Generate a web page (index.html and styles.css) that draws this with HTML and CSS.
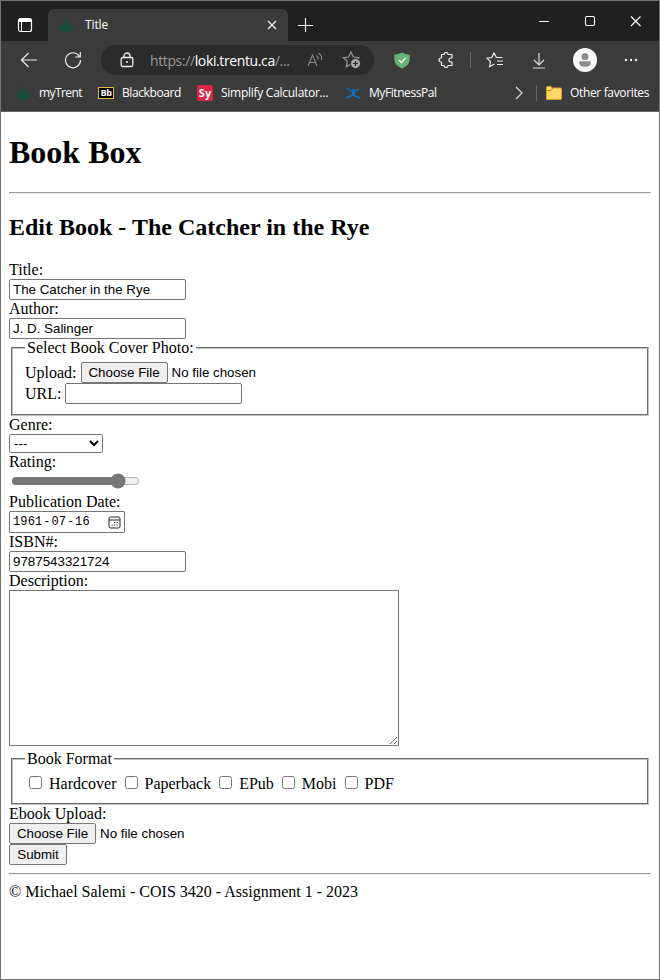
FILE: index.html
```html
<!DOCTYPE html>
<html lang="en">
<head>
<meta charset="utf-8">
<title>Title</title>
<link rel="stylesheet" href="styles.css">
</head>
<body>
<div class="window">
  <div class="tabs">
    <svg class="tab-menu" width="16" height="16" viewBox="0 0 16 16"><rect x="1.500" y="1.500" width="13" height="13" rx="2" fill="none" stroke="#fff" stroke-width="1.200"/><path d="M1.500 5V3a1.500 1.500 0 0 1 1.500-1.500h10A1.500 1.500 0 0 1 14.500 3v2z" fill="#fff"/><path d="M4.500 5v9.500" stroke="#fff"/></svg>
    <div class="tab">
      <svg class="leaf" width="16" height="16" viewBox="0 0 16 16"><path d="M8 .5l1.600 3.500-.9 3 2.800-1-.5 2H15.500l-1.700 3 .4 1.500L10.500 15h-5l-3.700-2.500.4-1.500L.5 8H5l-.5-2 2.800 1-.9-3z"/></svg>
      <span class="tab-title">Title</span>
      <svg width="10" height="10" viewBox="0 0 10 10"><path d="M1 1l8 8M9 1L1 9" stroke="#eee" stroke-width="1.300"/></svg>
    </div>
    <svg class="new-tab" width="16" height="16" viewBox="0 0 16 16"><path d="M8.500 1v14M1 8.500h15" stroke="#eee" stroke-width="1.200"/></svg>
    <svg class="controls" width="104" height="12" viewBox="0 0 104 12" fill="none" stroke="#fff" stroke-width="1.100"><path d="M0 6.500h10M92 1.500l9.500 9.500M101.500 1.500L92 11"/><rect x="46.500" y="1.500" width="9" height="9" rx="1.500"/></svg>
  </div>

  <div class="toolbar">
    <svg class="back" width="18" height="16" viewBox="0 0 18 16"><path d="M17 8H1.500M8.500 1L1.500 8l7 7" fill="none" stroke="#eee" stroke-width="1.200"/></svg>
    <svg class="reload" width="18" height="18" viewBox="0 0 18 18"><path d="M15.500 5.500A7.500 7.500 0 1 0 16.500 9M16.300 1v5h-5" fill="none" stroke="#eee" stroke-width="1.200"/></svg>
    <div class="address">
      <svg class="lock" width="14" height="16" viewBox="0 0 14 16"><rect x="1.200" y="5.500" width="11.600" height="9" rx="1.500" fill="none" stroke="#eee" stroke-width="1.300"/><path d="M4 5.500V4a3 3 0 0 1 6 0v1.500" fill="none" stroke="#eee" stroke-width="1.300"/><circle cx="7" cy="10" r="1" fill="#eee"/></svg>
      <span class="url">https://<b>loki.trentu.ca</b>/...</span>
      <svg class="read" width="16" height="16" viewBox="0 0 16 16" fill="none" stroke="#888" stroke-width="1.100"><path d="M1 14L5.500 3 10 14M2.700 10.500h5.700M9.500 3.500q2 1.500 1.500 4M11.500 1q4 2.500 3 7"/></svg>
      <svg class="star" width="19" height="18" viewBox="0 0 19 18"><path d="M9 1l2.300 5 5.500.6-4 3.700 1 5.500L9 13l-4.700 2.800 1-5.500-4-3.700 5.400-.6z" fill="none" stroke="#999" stroke-width="1.200"/><circle cx="13.500" cy="12.500" r="5" fill="#aaa" stroke="#2b2b2b"/><path d="M13.500 10v5M11 12.500h5" stroke="#222" stroke-width="1.200"/></svg>
    </div>
    <svg class="shield" width="16" height="17" viewBox="0 0 16 17"><path d="M8 .5Q11.500 2.500 15.700 2.800V8Q15 13.500 8 16.500 1 13.500.3 8V2.800Q4.500 2.500 8 .5z" fill="#67b279"/><path d="M5 8l2.400 2.500L11.500 6" fill="none" stroke="#fff" stroke-width="1.300"/></svg>
    <svg class="puzzle" width="16" height="16" viewBox="0 0 16 16"><path d="M3.500 2.500H6a2 2 0 0 1 4 0h4V6h-1a2 2 0 0 0 0 4h1v3.500h-4a2 2 0 0 1-4 0H3.500V10H3a2 2 0 0 1 0-4h.5z" fill="none" stroke="#eee" stroke-width="1.200" stroke-linejoin="round"/></svg>
    <i class="divider"></i>
    <svg class="faves" width="18" height="16" viewBox="0 0 18 16" fill="none" stroke="#eee" stroke-width="1.200"><path d="M16.500 5.500h-6L8 1 5.800 5.500 1 6.200l3.500 3.500-.9 5L8.500 12M11 9h6M11 12.500h6"/></svg>
    <svg class="download" width="14" height="17" viewBox="0 0 14 17" fill="none" stroke="#ddd" stroke-width="1.200"><path d="M7 1v11.500M2 8l5 5 5-5M1 16h12"/></svg>
    <svg class="avatar" width="24" height="24" viewBox="0 0 24 24"><circle cx="12" cy="12" r="12" fill="#f7f7f7"/><circle cx="12" cy="8.700" r="3.400" fill="#8b8b8b"/><path d="M6.200 14.500q0-1.300 1.300-1.300h9q1.300 0 1.300 1.300 0 4.200-5.800 4.200t-5.800-4.200z" fill="#8b8b8b"/></svg>
    <svg class="more" width="14" height="4" viewBox="0 0 14 4" fill="#eee"><circle cx="2" cy="2" r="1.200"/><circle cx="7" cy="2" r="1.200"/><circle cx="12" cy="2" r="1.200"/></svg>
  </div>

  <div class="bookmarks">
    <svg class="leaf" width="16" height="16" viewBox="0 0 16 16"><path d="M8 .5l1.600 3.500-.9 3 2.800-1-.5 2H15.500l-1.700 3 .4 1.500L10.500 15h-5l-3.700-2.500.4-1.500L.5 8H5l-.5-2 2.800 1-.9-3z"/></svg>
    <span class="mark mytrent">myTrent</span>
    <span class="bb">Bb</span>
    <span class="mark blackboard">Blackboard</span>
    <span class="sy">Sy</span>
    <span class="mark simplify">Simplify Calculator...</span>
    <svg width="16" height="14" viewBox="0 0 16 14"><circle cx="8.500" cy="4" r="1.300" fill="#0872bd"/><path d="M1.500 2l6 4 6-2.500M8 5.500v4M8 9l-7 3M8 9l7 3" fill="none" stroke="#0872bd" stroke-width="1.400"/><path d="M7 5.500l3 .3-.5 4-3 .2z" fill="#0872bd"/></svg>
    <span class="mark fitness">MyFitnessPal</span>
    <svg class="chevron" width="8" height="14" viewBox="0 0 8 14"><path d="M1 1l6 6-6 6" fill="none" stroke="#ddd" stroke-width="1.200"/></svg>
    <i class="divider"></i>
    <svg class="folder" width="16" height="14" viewBox="0 0 16 14"><path d="M.5 13.500V1.500q0-1 1-1H5L6.500 2h8q1 0 1 1v9.500q0 1-1 1z" fill="#ffd868" stroke="#d5a020"/><path d="M.5 4.500H5L6.800 2" fill="none" stroke="#b98512"/></svg>
    <span class="mark other">Other favorites</span>
  </div>

  <main class="page">
    <h1>Book Box</h1>
    <hr>
    <h2>Edit Book - The Catcher in the Rye</h2>
    <form>
      <label for="title">Title:</label>
      <input class="text" id="title" type="text" value="The Catcher in the Rye">
      <label for="author">Author:</label>
      <input class="text" id="author" type="text" value="J. D. Salinger">
      <fieldset class="cover">
        <legend>Select Book Cover Photo:</legend>
        <div class="line"><span>Upload:</span><button class="choose" type="button">Choose File</button><span class="nofile">No file chosen</span></div>
        <div class="line"><label for="url">URL:</label><input class="text" id="url" type="text"></div>
      </fieldset>
      <label for="genre">Genre:</label>
      <select id="genre"><option>---</option></select>
      <label for="rating">Rating:</label>
      <input id="rating" type="range" min="0" max="1000" value="876">
      <label>Publication Date:</label>
      <div class="date"><span>1961</span><span>-</span><span>07</span><span>-</span><span>16</span>
        <svg width="13" height="13" viewBox="0 0 13 13"><rect x="1" y="1" width="11" height="11" rx="1.800" fill="none" stroke="#222"/><path d="M1 4h11" stroke="#222"/><path d="M6 6.500h1.200M8.500 6.500h1.200M3.500 9h1.200M6 9h1.200M8.500 9h1.200" stroke="#222" stroke-width="1.200"/></svg>
      </div>
      <label for="isbn">ISBN#:</label>
      <input class="text" id="isbn" type="text" value="9787543321724">
      <label for="description">Description:</label>
      <textarea id="description"></textarea>
      <fieldset class="formats">
        <legend>Book Format</legend>
        <div class="checks">
          <input type="checkbox"><span>Hardcover</span>
          <input type="checkbox"><span>Paperback</span>
          <input type="checkbox"><span>EPub</span>
          <input type="checkbox"><span>Mobi</span>
          <input type="checkbox"><span>PDF</span>
        </div>
      </fieldset>
      <label>Ebook Upload:</label>
      <div class="line"><button class="choose" type="button">Choose File</button><span class="nofile">No file chosen</span></div>
      <button class="submit" type="button">Submit</button>
    </form>
    <hr>
    <footer>© Michael Salemi - COIS 3420 - Assignment 1 - 2023</footer>
  </main>
</div>
</body>
</html>
```
FILE: styles.css
```css
* { box-sizing: border-box; }
body { margin: 0; background: #fff; overflow: hidden; }
svg, i { display: block; flex: none; }
.window { width: 660px; height: 980px; border: 1px solid #747474; font-family: "Open Sans", "Noto Sans", sans-serif; }
.tabs { height: 40px; background: #202020; display: flex; align-items: center; }
.tab-menu { margin: 8px 0 0 16px; }
.tab { width: 240px; height: 32px; margin: 8px 0 0 15px; padding: 0 11px; border-radius: 6px 6px 0 0; background: #3b3b3b; display: flex; align-items: center; }
.tab > svg:last-child { margin-left: auto; }
.leaf { fill: #174c38; }
.tab .leaf { margin-left: -1px; }
.tab-title { margin: -1px 0 0 11px; font-size: 12px; color: #fff; letter-spacing: -.1px; }
.new-tab { margin: 7px 0 0 9px; }
.controls { margin-left: 226px; }
.toolbar { height: 38px; background: #3b3b3b; display: flex; align-items: center; }
.back { margin-left: 19px; }
.reload { margin-left: 26px; }
.address { width: 273px; height: 30px; margin-left: 19px; border-radius: 15px; background: #2b2b2b; display: flex; align-items: center; }
.lock { margin-left: 19px; }
.url { width: 142px; margin: 0 0 0 16px; white-space: nowrap; font-size: 14px; color: #999; letter-spacing: -.38px; }
.url b { font-weight: 400; color: #fff; }
.read { margin-left: 15px; }
.star { margin-left: 19px; }
.shield { margin-left: 20px; }
.puzzle { margin-left: 28px; }
.divider { width: 1px; height: 16px; background: #656565; }
.toolbar .divider { margin-left: 16px; }
.faves { margin-left: 15px; }
.download { margin-left: 28px; }
.avatar { margin-left: 27px; }
.more { margin-left: 27px; }
.bookmarks { height: 33px; padding: 0 0 4px 14px; background: #3b3b3b; border-bottom: 1px solid #656565; display: flex; align-items: center; }
.mark { font-size: 12px; line-height: 16px; color: #fff; white-space: nowrap; }
.mytrent { width: 43px; margin: 0 16px 0 8px; letter-spacing: -.6px; }
.mytrent { letter-spacing: -.58px; }
.bb { width: 16px; height: 12px; border: 1px solid #e8b93c; background: #000; color: #fff; font: bold 9px/10px "Open Sans", sans-serif; text-align: center; letter-spacing: -.3px; }
.blackboard { width: 60px; margin: 0 15px 0 8px; letter-spacing: -.4px; }
.sy { width: 16px; height: 16px; border-radius: 2px; background: #db2445; color: #fff; font: bold 11px/15px "Open Sans", sans-serif; text-align: center; }
.simplify { width: 109px; margin: 0 15px 0 8px; letter-spacing: -.27px; }
.fitness { width: 68px; margin-left: 8px; letter-spacing: -.43px; }
.chevron { margin-left: 78px; }
.bookmarks .divider { margin-left: 13px; }
.folder { margin-left: 9px; }
.other { margin-left: 8px; letter-spacing: -.35px; }

.page { padding: 0 8px; font: 16px/18px "Liberation Serif", serif; color: #000; }
h1 { height: 36px; margin: 22px 0 0; font-size: 32px; line-height: 36px; }
hr { margin: 22px 0 0; height: 2px; }
h2 { height: 27px; margin: 20px 0; font-size: 24px; line-height: 27px; }
form { display: flex; flex-direction: column; align-items: flex-start; }
form > label { height: 18px; }
.text { width: 177px; height: 21px; margin: 0; padding: 1px 2px 1px 3px; border: 1px solid #767676; border-radius: 2px; background: #fff; color: #000; font: 13.333px "Liberation Sans", sans-serif; }
fieldset { width: 638px; margin: 0 2px; padding: 5px 12px 10px; border: 2px groove #c0c0c0; min-width: 0; }
legend { height: 18px; padding: 0 2px; }
.cover { height: 77px; }
.line { height: 21px; display: flex; align-items: center; }
.cover .choose { margin-left: 4px; }
.cover .text { margin-left: 4px; }
button { height: 21px; margin: 0; padding: 0; border: 1px solid #767676; border-radius: 2px; background: #efefef; color: #000; font: 13.333px "Liberation Sans", sans-serif; }
.choose { width: 87px; }
.submit { width: 58px; }
.nofile { margin-left: 4px; font: 13.333px "Liberation Sans", sans-serif; }
select { width: 94px; height: 19px; margin: 0; border: 1px solid #767676; border-radius: 2px; background: #fff; color: #000; font: 13.333px "Liberation Sans", sans-serif; }
#rating { width: 129px; height: 16px; margin: 2px 2px 4px; accent-color: #767676; }
.date { width: 116px; height: 22px; padding: 0 3px; border: 1px solid #767676; border-radius: 1px; display: flex; align-items: center; font: 12px "Liberation Mono", monospace; }
.date span:nth-child(even) { width: 9px; text-align: center; }
.date span:nth-child(odd) { letter-spacing: .15px; }
.date svg { margin-left: auto; }
textarea { width: 390px; height: 156px; margin: 0; border: 1px solid #767676; border-radius: 0; background: #fff; }
.formats { height: 55px; margin-top: 4px; }
.checks { height: 22px; display: flex; align-items: center; }
.checks input { flex: none; width: 13px; height: 13px; margin: 0 7px 3px 4px; }
.checks span { margin-right: 4px; }
form + hr { margin-top: 8px; }
footer { margin-top: 8px; height: 18px; }
```
